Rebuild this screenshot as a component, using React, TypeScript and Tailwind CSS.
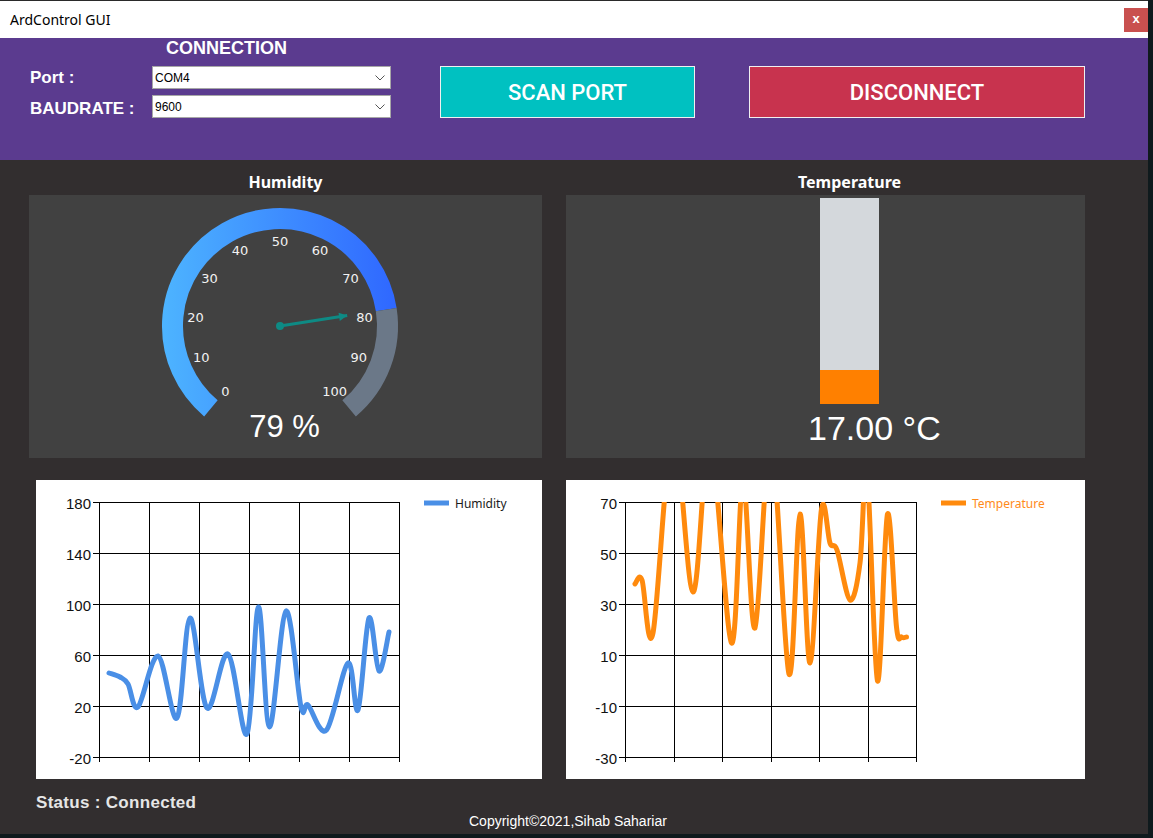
import React from 'react';

type Pt = [number, number];

const humidityPts: Pt[] = [
  [109, 673], [120, 677], [128, 684], [138, 707], [158, 656], [177, 718], [190, 618],
  [207, 708], [228, 654], [247, 734], [258.5, 607], [269.5, 727], [286, 611], [301, 707],
  [308, 705], [326.5, 730], [348, 663], [358, 710], [369, 618], [379, 671], [389, 632],
];

const tempPts: Pt[] = [
  [635, 584], [642, 580], [653, 633], [673, 430], [693, 592], [710, 440], [731.5, 643],
  [743, 480], [755, 628], [771, 440], [789, 674], [800, 514], [810, 663], [821.5, 509],
  [830, 543], [837, 550], [850, 600], [860, 563], [867, 470], [877.5, 681], [887.5, 514],
  [896.5, 627], [901.5, 637], [906.5, 637],
];

function smoothPath(pts: Pt[]) {
  let d = `M${pts[0][0]},${pts[0][1]}`;
  for (let i = 0; i < pts.length - 1; i++) {
    const p0 = pts[i - 1] || pts[i];
    const p1 = pts[i];
    const p2 = pts[i + 1];
    const p3 = pts[i + 2] || p2;
    const c1x = p1[0] + (p2[0] - p0[0]) / 6;
    const c1y = p1[1] + (p2[1] - p0[1]) / 6;
    const c2x = p2[0] - (p3[0] - p1[0]) / 6;
    const c2y = p2[1] - (p3[1] - p1[1]) / 6;
    d += ` C${c1x},${c1y} ${c2x},${c2y} ${p2[0]},${p2[1]}`;
  }
  return d;
}

// angle in degrees, measured clockwise from 12 o'clock
function polar(cx: number, cy: number, r: number, deg: number) {
  const a = (deg * Math.PI) / 180;
  return [cx + r * Math.sin(a), cy - r * Math.cos(a)];
}

function arc(cx: number, cy: number, r: number, from: number, to: number) {
  const [x1, y1] = polar(cx, cy, r, from);
  const [x2, y2] = polar(cx, cy, r, to);
  const large = to - from > 180 ? 1 : 0;
  return `M${x1},${y1} A${r},${r} 0 ${large} 1 ${x2},${y2}`;
}

const Gauge = ({ value }: { value: number }) => {
  const cx = 280;
  const cy = 326;
  const toDeg = (v: number) => -140 + v * 2.8;
  const needle = toDeg(value);
  const [tx, ty] = polar(cx, cy, 68, needle);
  const [hx1, hy1] = polar(cx, cy, 60, needle - 4);
  const [hx2, hy2] = polar(cx, cy, 60, needle + 4);
  const ticks = [0, 10, 20, 30, 40, 50, 60, 70, 80, 90, 100];

  return (
    <svg width={513} height={263} viewBox="29 195 513 263" className="block">
      <defs>
        <linearGradient id="hum" gradientUnits="userSpaceOnUse" x1={162} y1={0} x2={397} y2={0}>
          <stop offset="0" stopColor="#4db4ff" />
          <stop offset="1" stopColor="#2f67ff" />
        </linearGradient>
      </defs>
      <path d={arc(cx, cy, 107.5, toDeg(0), needle)} fill="none" stroke="url(#hum)" strokeWidth={21} />
      <path d={arc(cx, cy, 107.5, needle, toDeg(100))} fill="none" stroke="#6b7888" strokeWidth={21} />
      {ticks.map((t) => {
        const [x, y] = polar(cx, cy, 85, toDeg(t));
        return (
          <text
            key={t}
            x={x}
            y={y}
            textAnchor="middle"
            dominantBaseline="central"
            fontSize={13}
            fill="#f2f2f2"
            fontFamily="'DejaVu Sans', Verdana, sans-serif"
          >
            {t}
          </text>
        );
      })}
      <line x1={cx} y1={cy} x2={tx} y2={ty} stroke="#0e8a84" strokeWidth={3} />
      <polygon points={`${tx},${ty} ${hx1},${hy1} ${hx2},${hy2}`} fill="#0e8a84" />
      <circle cx={cx} cy={cy} r={4} fill="#0e8a84" />
      <text
        x={284.5}
        y={437}
        textAnchor="middle"
        fontSize={31}
        fill="#ffffff"
        fontFamily="'Liberation Sans', Arial, sans-serif"
      >
        {value} %
      </text>
    </svg>
  );
};

type ChartProps = {
  vb: [number, number, number, number];
  xs: number[];
  labels: string[];
  pts: Pt[];
  color: string;
  legendX: number;
  legendText: string;
  legendColor: string;
  id: string;
};

const ys = [502, 553, 604, 655, 706, 757];

const Chart = ({ vb, xs, labels, pts, color, legendX, legendText, legendColor, id }: ChartProps) => {
  const left = xs[0];
  const right = xs[xs.length - 1];
  const top = ys[0];
  const bottom = ys[ys.length - 1];
  return (
    <svg width={vb[2]} height={vb[3]} viewBox={vb.join(' ')} className="block bg-white">
      <defs>
        <clipPath id={id}>
          <rect x={left} y={top} width={right - left} height={bottom - top} />
        </clipPath>
      </defs>
      {ys.map((y) => (
        <line key={y} x1={left - 6} x2={right + 0.5} y1={y + 0.5} y2={y + 0.5} stroke="#000" strokeWidth={1} />
      ))}
      {xs.map((x) => (
        <line key={x} x1={x + 0.5} x2={x + 0.5} y1={top} y2={bottom + 5} stroke="#000" strokeWidth={1} />
      ))}
      {labels.map((l, i) => (
        <text
          key={l}
          x={left - 8}
          y={ys[i] + 1}
          textAnchor="end"
          dominantBaseline="central"
          fontSize={15}
          fill="#111"
          fontFamily="'Liberation Sans', Arial, sans-serif"
        >
          {l}
        </text>
      ))}
      <path
        d={smoothPath(pts)}
        fill="none"
        stroke={color}
        strokeWidth={5}
        strokeLinecap="round"
        strokeLinejoin="round"
        clipPath={`url(#${id})`}
      />
      <line x1={legendX} x2={legendX + 25} y1={503} y2={503} stroke={color} strokeWidth={5} />
      <text
        x={legendX + 31}
        y={503}
        dominantBaseline="central"
        fontSize={12}
        fill={legendColor}
        fontFamily="'Noto Sans', 'Open Sans', sans-serif"
      >
        {legendText}
      </text>
    </svg>
  );
};

const Combo = ({ value }: { value: string }) => (
  <div className="w-[239px] h-[23px] bg-white border border-[#a7a7a7] flex items-center justify-between pl-[2px] pr-[5px] text-[12px] text-black font-['Liberation_Sans',Arial,sans-serif]">
    <span>{value}</span>
    <svg width="10" height="6" viewBox="0 0 10 6">
      <path d="M0.5 0.5 L5 5 L9.5 0.5" fill="none" stroke="#555" strokeWidth="1" />
    </svg>
  </div>
);

export default function App() {
  return (
    <div className="w-full h-[838px] bg-[#0f1a1d] font-['Liberation_Sans',Arial,sans-serif]">
      <div className="w-[1148px] h-[834px] flex flex-col">
        {/* title bar */}
        <div className="h-[38px] bg-white border-t border-[#2a2a2a] flex items-center justify-between pl-[10px]">
          <span className="text-[14px] text-black font-['Noto_Sans',sans-serif]">ArdControl GUI</span>
          <div className="w-[24px] h-[24px] bg-[#c9504f] flex items-center justify-center text-white text-[13px] font-bold leading-none pb-[2px]">
            x
          </div>
        </div>

        {/* connection header */}
        <div className="h-[122px] bg-[#5b3b8f] flex pl-[30px] text-white">
          <div className="w-[361px] flex flex-col">
            <div className="pl-[136px] text-[18px] leading-[20px] font-bold">CONNECTION</div>
            <div className="mt-[8px] h-[23px] flex items-center">
              <div className="w-[122px] text-[17px] font-bold">Port :</div>
              <Combo value="COM4" />
            </div>
            <div className="mt-[6px] h-[23px] flex items-center">
              <div className="w-[122px] text-[17px] font-bold pt-[4px]">BAUDRATE :</div>
              <Combo value="9600" />
            </div>
          </div>
          <div className="ml-[49px] mt-[28px] flex gap-[54px] h-[52px] font-['Roboto',sans-serif]">
            <button className="w-[255px] h-[52px] bg-[#00c1c1] border border-[#f0f0f0] text-white text-[22px] font-medium">
              SCAN PORT
            </button>
            <button className="w-[336px] h-[52px] bg-[#c8334e] border border-[#f0f0f0] text-white text-[22px] font-medium">
              DISCONNECT
            </button>
          </div>
        </div>

        {/* body */}
        <div className="flex-1 bg-[#322e2f] pl-[29px] flex flex-col">
          <div className="flex gap-[24px] mt-[12px]">
            <div className="w-[513px] flex flex-col">
              <div className="h-[20px] text-center text-[16px] leading-[20px] font-bold text-white font-['Noto_Sans',sans-serif]">
                Humidity
              </div>
              <div className="mt-[3px] h-[263px] bg-[#414141]">
                <Gauge value={79} />
              </div>
            </div>
            <div className="w-[519px] flex flex-col">
              <div className="h-[20px] pl-[48px] text-center text-[16px] leading-[20px] font-bold text-white font-['Noto_Sans',sans-serif]">
                Temperature
              </div>
              <div className="mt-[3px] h-[263px] bg-[#414141] flex flex-col pt-[3px]">
                <div className="ml-[254px] w-[59px] h-[206px] bg-[#d4d8dc] flex flex-col justify-end">
                  <div className="h-[34px] bg-[#ff8000]" />
                </div>
                <div className="ml-[242px] mt-[6px] text-[34px] leading-[36px] text-white">17.00 °C</div>
              </div>
            </div>
          </div>

          <div className="flex gap-[24px] mt-[22px]">
            <div className="ml-[7px]">
              <Chart
                id="clipHum"
                vb={[36, 480, 506, 299]}
                xs={[99, 149, 199, 249, 299, 349, 399]}
                labels={['180', '140', '100', '60', '20', '-20']}
                pts={humidityPts}
                color="#4a8fe6"
                legendX={424}
                legendText="Humidity"
                legendColor="#1a1a1a"
              />
            </div>
            <Chart
              id="clipTemp"
              vb={[566, 480, 519, 299]}
              xs={[625, 674, 722, 771, 819, 868, 916]}
              labels={['70', '50', '30', '10', '-10', '-30']}
              pts={tempPts}
              color="#ff8a0d"
              legendX={941}
              legendText="Temperature"
              legendColor="#ff8a1a"
            />
          </div>

          <div className="mt-[14px] pl-[7px] text-[17px] leading-[20px] font-bold tracking-[0.3px] text-[#e6e6e6]">
            Status : Connected
          </div>
          <div className="pl-[440px] text-[14px] leading-[16px] text-white">Copyright©2021,Sihab Sahariar</div>
        </div>
      </div>
    </div>
  );
}
